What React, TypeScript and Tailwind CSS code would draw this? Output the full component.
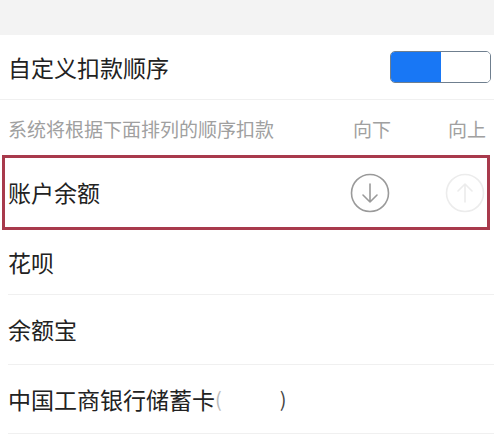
import React from 'react';

function CircleArrow({ up, faint }: { up?: boolean; faint?: boolean }) {
  const c = faint ? '#ececec' : '#9a9a9a';
  return (
    <svg width="40" height="40" viewBox="0 0 40 40" fill="none">
      <circle cx="20" cy="20" r="18.5" stroke={c} strokeWidth="1.6" />
      {up ? (
        <path d="M20 29V11M13 18l7-7 7 7" stroke={c} strokeWidth="1.6" strokeLinecap="round" strokeLinejoin="round" />
      ) : (
        <path d="M20 11v18M13 22l7 7 7-7" stroke={c} strokeWidth="1.6" strokeLinecap="round" strokeLinejoin="round" />
      )}
    </svg>
  );
}

export default function App() {
  const font = { fontFamily: '"Noto Sans CJK SC", "Noto Sans", sans-serif' };
  return (
    <div className="w-[494px] h-[435px] bg-white overflow-hidden" style={font}>
      <div className="h-[35px] bg-[#f3f3f3]" />

      {/* custom order switch */}
      <div className="h-[65px] flex items-center justify-between pl-2 pr-[3px] border-b border-[#f0f0f0]">
        <span className="text-[23px] text-[#222222]">自定义扣款顺序</span>
        <div className="w-[101px] h-[32px] flex rounded-[5px] border border-[#6f7f8f] overflow-hidden">
          <div className="w-[50px] bg-[#1877f5]" />
          <div className="flex-1 bg-white" />
        </div>
      </div>

      {/* hint row */}
      <div className="h-[55px] flex items-center pl-2 pt-[3px] text-[19px] text-[#a0a0a0]">
        <span className="flex-1">系统将根据下面排列的顺序扣款</span>
        <span className="w-[95px]">向下</span>
        <span className="w-[46px]">向上</span>
      </div>

      {/* highlighted row */}
      <div className="h-[75px] mx-[2px] w-[488px] border-[3px] border-[#a83a4c] flex items-center pl-[3px]">
        <span className="flex-1 text-[23px] text-[#222222]">账户余额</span>
        <div className="w-[95px]">
          <CircleArrow />
        </div>
        <div className="w-[42px]">
          <CircleArrow up faint />
        </div>
      </div>

      <div className="h-[65px] flex items-center ml-2 border-b border-[#f0f0f0]">
        <span className="text-[23px] text-[#222222]">花呗</span>
      </div>
      <div className="h-[70px] flex items-center ml-2 border-b border-[#f0f0f0]">
        <span className="text-[23px] text-[#222222]">余额宝</span>
      </div>
      <div className="h-[69px] flex items-center ml-2 border-b border-[#f0f0f0]">
        <span className="text-[23px] text-[#222222]">中国工商银行储蓄卡</span>
        <span className="text-[20px] text-[#bbbbbb]">(</span>
        <span className="w-[58px]" />
        <span className="text-[20px] text-[#444444]">)</span>
      </div>
    </div>
  );
}
